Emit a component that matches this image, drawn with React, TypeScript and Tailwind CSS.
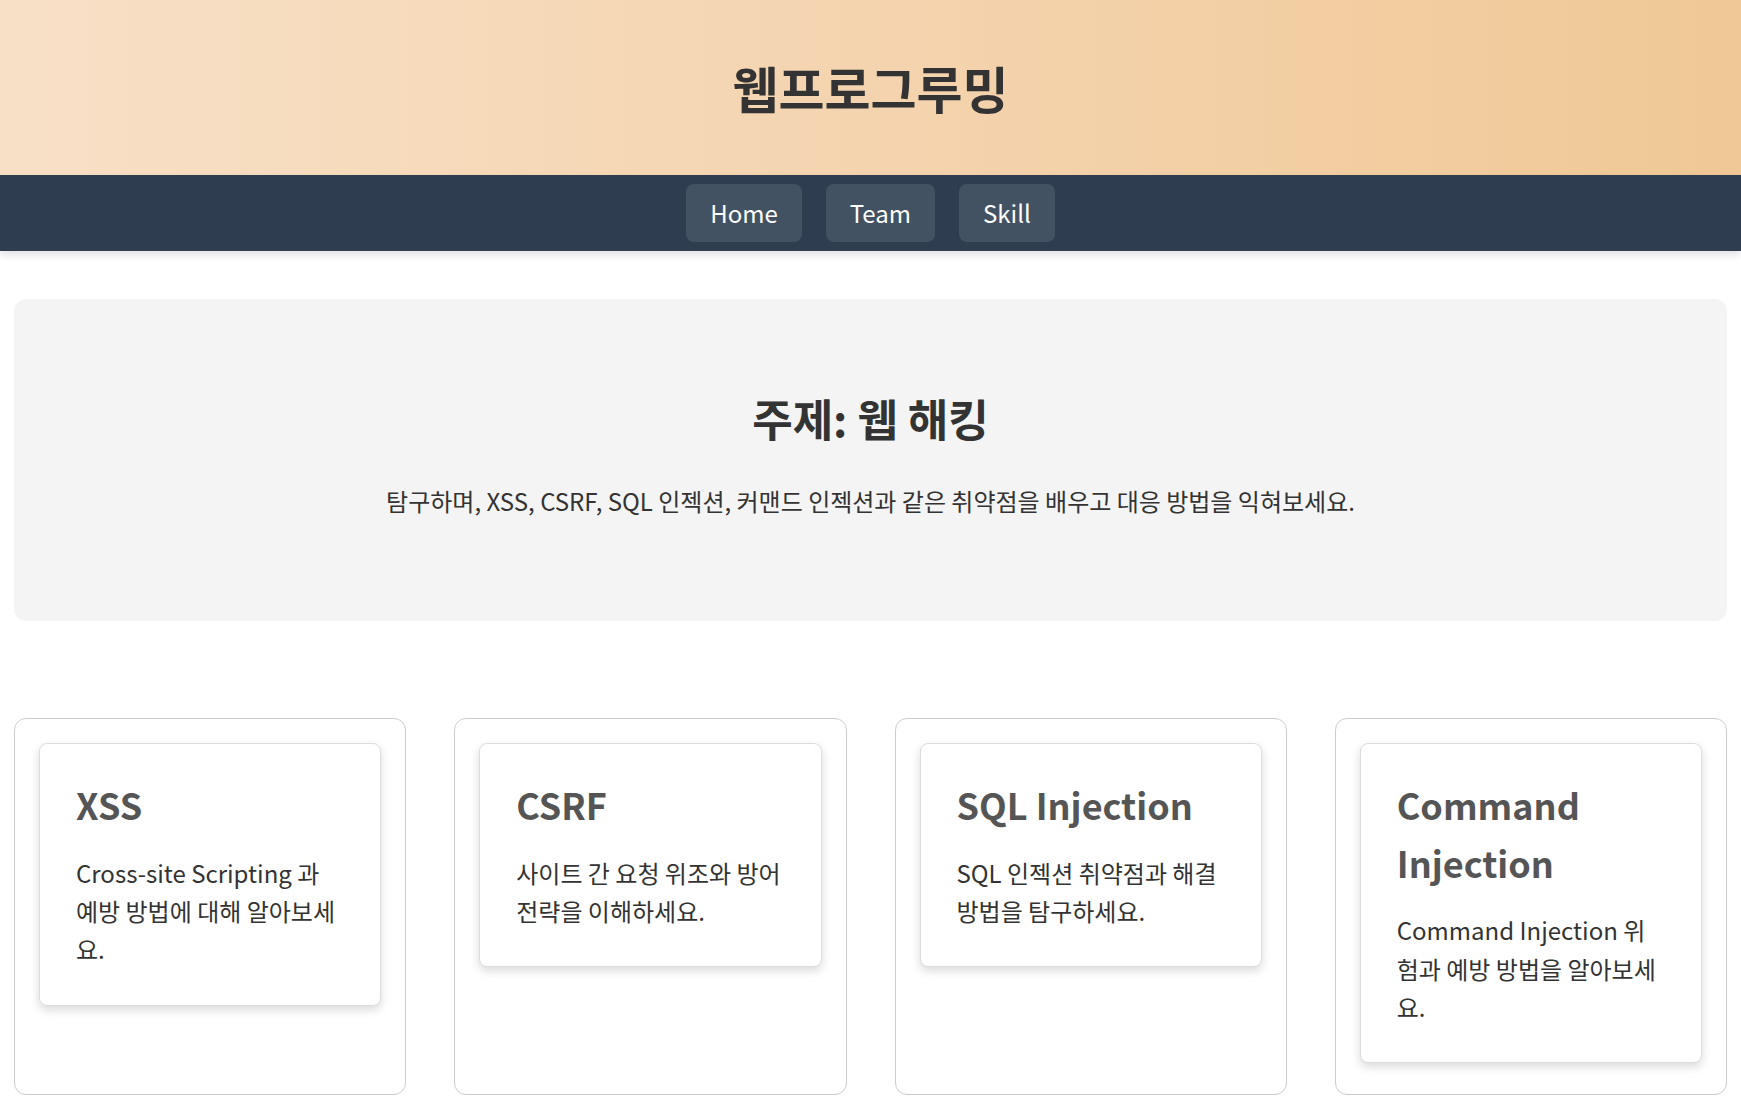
export default function App() {
  const cards = [
    ["XSS", "Cross-site Scripting 과 예방 방법에 대해 알아보세요."],
    ["CSRF", "사이트 간 요청 위조와 방어 전략을 이해하세요."],
    ["SQL Injection", "SQL 인젝션 취약점과 해결 방법을 탐구하세요."],
    ["Command Injection", "Command Injection 위험과 예방 방법을 알아보세요."],
  ];
  return (
    <div className="min-h-[1116px] bg-white text-[#333]" style={{ fontFamily: '"Noto Sans CJK KR", "Noto Sans", sans-serif' }}>
      <header className="h-[175px] flex items-center justify-center bg-gradient-to-r from-[#f8e0c7] to-[#f0c896]">
        <h1 className="text-[50px] font-bold text-[#333]">웹프로그루밍</h1>
      </header>
      <nav className="h-[76px] bg-[#2e3e50] flex justify-center items-center gap-6 shadow-[0_4px_8px_rgba(0,0,0,0.12)]">
        {["Home", "Team", "Skill"].map((t) => (
          <span key={t} className="px-6 h-[58px] flex items-center rounded-lg bg-[#435263] text-white text-[24px]">{t}</span>
        ))}
      </nav>
      <div className="px-[14px] pt-12">
        <section className="h-[322px] bg-[#f4f4f4] rounded-xl flex flex-col items-center justify-center pb-4">
          <h2 className="text-[44px] font-bold text-[#333]">주제: 웹 해킹</h2>
          <p className="mt-8 text-[24px] text-[#333]">탐구하며, XSS, CSRF, SQL 인젝션, 커맨드 인젝션과 같은 취약점을 배우고 대응 방법을 익혀보세요.</p>
        </section>
        <div className="grid grid-cols-4 gap-12 mt-[97px]">
          {cards.map(([t, d]) => (
            <div key={t} className="h-[377px] border border-[#ccc] rounded-xl p-6">
              <div className="bg-white border border-[#ddd] rounded-lg px-9 pt-8 pb-9 shadow-[0_4px_10px_rgba(0,0,0,0.15)]">
                <h3 className="text-[36px] font-bold text-[#555] leading-[1.6]">{t}</h3>
                <p className="mt-5 text-[24px] leading-[1.6] text-[#333]">{d}</p>
              </div>
            </div>
          ))}
        </div>
      </div>
    </div>
  );
}
